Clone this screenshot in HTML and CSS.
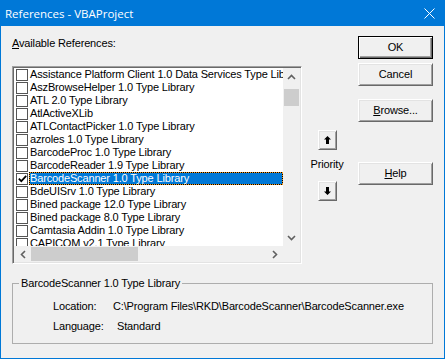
FILE: index.html
```html
<!DOCTYPE html>
<html lang="en">
<head>
<meta charset="UTF-8">
<title>References - VBAProject</title>
<link rel="stylesheet" href="styles.css">
</head>
<body>
<div class="window">
  <div class="titlebar">
    <span class="title">References - VBAProject</span>
    <svg class="close" width="11" height="11" viewBox="0 0 11 11"><path d="M0.5 0.5 L10.5 10.5 M10.5 0.5 L0.5 10.5" stroke="#fff" stroke-width="1"/></svg>
  </div>
  <div class="content">
    <div class="top">
      <div class="left">
        <div class="label"><u>A</u>vailable References:</div>
        <div class="listbox">
          <div class="list-main">
            <div class="items">
              <div class="item"><span class="chk"></span><span class="name">Assistance Platform Client 1.0 Data Services Type Library</span></div>
              <div class="item"><span class="chk"></span><span class="name">AszBrowseHelper 1.0 Type Library</span></div>
              <div class="item"><span class="chk"></span><span class="name">ATL 2.0 Type Library</span></div>
              <div class="item"><span class="chk"></span><span class="name">AtlActiveXLib</span></div>
              <div class="item"><span class="chk"></span><span class="name">ATLContactPicker 1.0 Type Library</span></div>
              <div class="item"><span class="chk"></span><span class="name">azroles 1.0 Type Library</span></div>
              <div class="item"><span class="chk"></span><span class="name">BarcodeProc 1.0 Type Library</span></div>
              <div class="item"><span class="chk"></span><span class="name">BarcodeReader 1.9 Type Library</span></div>
              <div class="item sel"><span class="chk"><svg width="9" height="8" viewBox="0 0 9 8"><path d="M0.8 3.6 L3.3 6.2 L8.2 0.9" fill="none" stroke="#000" stroke-width="1.7"/></svg></span><span class="name">BarcodeScanner 1.0 Type Library</span></div>
              <div class="item"><span class="chk"></span><span class="name">BdeUISrv 1.0 Type Library</span></div>
              <div class="item"><span class="chk"></span><span class="name">Bined package 12.0 Type Library</span></div>
              <div class="item"><span class="chk"></span><span class="name">Bined package 8.0 Type Library</span></div>
              <div class="item"><span class="chk"></span><span class="name">Camtasia Addin 1.0 Type Library</span></div>
              <div class="item"><span class="chk"></span><span class="name">CAPICOM v2.1 Type Library</span></div>
            </div>
            <div class="vscroll">
              <div class="sb-btn"><svg width="9" height="6" viewBox="0 0 9 6"><path d="M1 5 L4.5 1.5 L8 5" fill="none" stroke="#606060" stroke-width="1.6"/></svg></div>
              <div class="vtrack"><div class="vthumb"></div></div>
              <div class="sb-btn"><svg width="9" height="6" viewBox="0 0 9 6"><path d="M1 1 L4.5 4.5 L8 1" fill="none" stroke="#606060" stroke-width="1.6"/></svg></div>
            </div>
          </div>
          <div class="hscroll-row">
            <div class="hscroll">
              <div class="sb-btn"><svg width="6" height="9" viewBox="0 0 6 9"><path d="M5 1 L1.5 4.5 L5 8" fill="none" stroke="#606060" stroke-width="1.6"/></svg></div>
              <div class="htrack"><div class="hthumb"></div></div>
              <div class="sb-btn"><svg width="6" height="9" viewBox="0 0 6 9"><path d="M1 1 L4.5 4.5 L1 8" fill="none" stroke="#606060" stroke-width="1.6"/></svg></div>
            </div>
            <div class="corner"></div>
          </div>
        </div>
      </div>

      <div class="priority">
        <div class="btn spin"><svg width="7" height="8" viewBox="0 0 7 8"><path d="M3.5 0 L7 3.5 H5 V8 H2 V3.5 H0 Z" fill="#000"/></svg></div>
        <div class="priority-label">Priority</div>
        <div class="btn spin down"><svg width="7" height="8" viewBox="0 0 7 8"><path d="M3.5 8 L7 4.5 H5 V0 H2 V4.5 H0 Z" fill="#000"/></svg></div>
      </div>

      <div class="buttons">
        <div class="btn default">OK</div>
        <div class="btn cancel">Cancel</div>
        <div class="btn browse"><u>B</u>rowse...</div>
        <div class="btn help"><u>H</u>elp</div>
      </div>
    </div>

    <fieldset class="group">
      <legend>BarcodeScanner 1.0 Type Library</legend>
      <div class="info">
        <div class="info-row"><span class="k">Location:</span><span class="v">C:\Program Files\RKD\BarcodeScanner\BarcodeScanner.exe</span></div>
        <div class="info-row second"><span class="k">Language:</span><span class="v lang">Standard</span></div>
      </div>
    </fieldset>
  </div>
</div>
</body>
</html>
```

FILE: styles.css
```css
*{box-sizing:border-box; margin:0; padding:0;}
body{ background:#f0f0f0; color:#000; font-family:"Liberation Sans",Arial,sans-serif; font-size:11px; letter-spacing:-0.15px;}
u{text-decoration:underline; text-underline-offset:1px;}

.window{ width:445px; height:359px; border:1px solid #0078d7; border-top:0; background:#f0f0f0; display:flex; flex-direction:column;}
.titlebar{ height:26px; flex:none; background:#0078d7; color:#fff; display:flex; align-items:center; justify-content:space-between; padding:0 9px 0 4px; font-family:"Open Sans","Liberation Sans",sans-serif; font-size:11.5px; letter-spacing:0;}
.close{ display:block; margin-top:1px;}

.content{ flex:1; padding:0 11px;}
.top{ display:flex; height:238px;}

/* list */
.left{ width:290px;}
.label{ margin-top:11px; line-height:13px; height:13px;}
.listbox{
  margin-top:16px; height:198px; padding:1px; display:flex; flex-direction:column;
  border:1px solid; border-color:#a0a0a0 #fff #fff #a0a0a0;
  box-shadow:inset 1px 1px 0 #696969, inset -1px -1px 0 #e3e3e3;
}
.list-main{ display:flex; height:178px;}
.items{ flex:1; background:#fff; overflow:hidden;}
.item{ display:flex; align-items:center; height:13px; white-space:nowrap;}
.chk{ flex:none; width:12px; height:12px; margin-left:2px; border:1px solid #555; background:#fff; display:flex; align-items:center; justify-content:center;}
.name{ flex:1; overflow:hidden; height:13px; line-height:13px; padding-left:1px; margin-left:1px;}
.item.sel .name{
  color:#fff;
  background:
    repeating-linear-gradient(90deg,#000 0 1px,#f29a1f 1px 2px) top/100% 1px no-repeat,
    repeating-linear-gradient(90deg,#000 0 1px,#f29a1f 1px 2px) bottom/100% 1px no-repeat,
    repeating-linear-gradient(0deg,#000 0 1px,#f29a1f 1px 2px) left/1px 100% no-repeat,
    repeating-linear-gradient(0deg,#000 0 1px,#f29a1f 1px 2px) right/1px 100% no-repeat,
    #0078d7;
}

/* scrollbars */
.vscroll{ width:17px; flex:none; background:#f0f0f0; display:flex; flex-direction:column;}
.sb-btn{ width:17px; height:17px; flex:none; display:flex; align-items:center; justify-content:center;}
.vtrack{ flex:1;}
.vthumb{ width:15px; height:17px; margin:4px 1px 0; background:#cdcdcd;}
.hscroll-row{ display:flex; height:16px;}
.hscroll{ flex:1; display:flex; background:#f0f0f0;}
.hscroll .sb-btn{ height:16px;}
.htrack{ flex:1;}
.hthumb{ width:107px; height:14px; margin-top:1px; background:#cdcdcd;}
.corner{ width:17px; background:#f0f0f0;}

/* buttons */
.btn{
  height:23px; display:flex; align-items:center; justify-content:center; line-height:13px; background:#f0f0f0;
  border:1px solid; border-color:#fff #696969 #696969 #fff;
  box-shadow:inset 1px 1px 0 #e3e3e3, inset -1px -1px 0 #a0a0a0;
}
.btn.default{ border-color:#000; box-shadow:inset 1px 1px 0 #fff, inset -1px -1px 0 #696969, inset -2px -2px 0 #a0a0a0;}
.priority{ width:38px; margin-left:6px; display:flex; flex-direction:column; align-items:center; padding-top:104px;}
.spin{ width:19px; height:20px;}
.spin.down{ margin-top:10px;}
.priority-label{ margin-top:8px; line-height:13px;}
.buttons{ width:75px; margin-left:12px; display:flex; flex-direction:column; padding-top:10px;}
.cancel{ margin-top:4px;}
.browse{ margin-top:13px;}
.help{ margin-top:40px;}

/* group */
.group{ margin-top:13px; border:1px solid #adadad; padding:0 0 10px 0;}
.group legend{ margin-left:6px; padding:0 2px; line-height:13px;}
.info{ padding-left:40px; margin-top:10px;}
.info-row{ display:flex; line-height:13px; white-space:nowrap;}
.info-row.second{ margin-top:7px;}
.info-row .k{ width:60px;}
.info-row .lang{ padding-left:4px;}
```
